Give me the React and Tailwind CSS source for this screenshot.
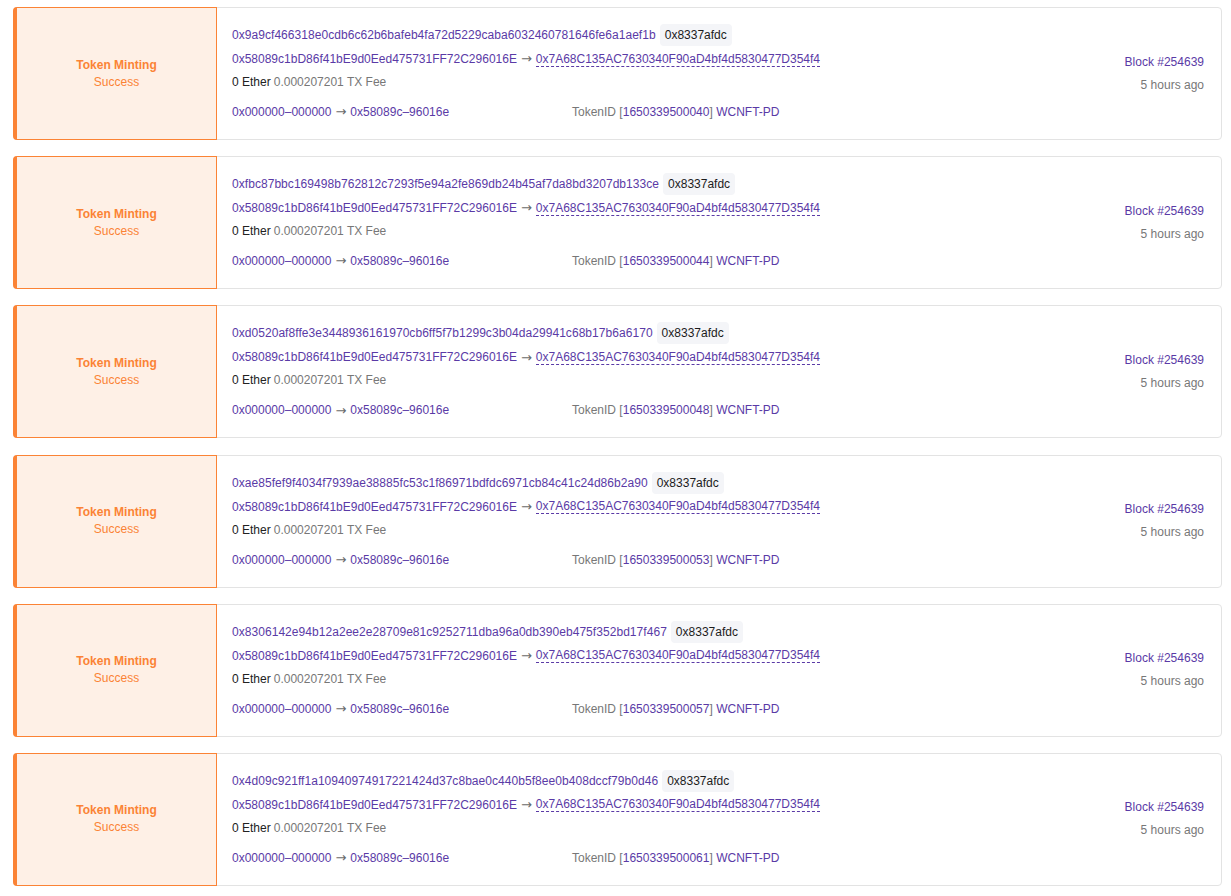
import React from 'react';

const rows = [
    { hash: '0x9a9cf466318e0cdb6c62b6bafeb4fa72d5229caba6032460781646fe6a1aef1b', token: '1650339500040' },
    { hash: '0xfbc87bbc169498b762812c7293f5e94a2fe869db24b45af7da8bd3207db133ce', token: '1650339500044' },
    { hash: '0xd0520af8ffe3e3448936161970cb6ff5f7b1299c3b04da29941c68b17b6a6170', token: '1650339500048' },
    { hash: '0xae85fef9f4034f7939ae38885fc53c1f86971bdfdc6971cb84c41c24d86b2a90', token: '1650339500053' },
    { hash: '0x8306142e94b12a2ee2e28709e81c9252711dba96a0db390eb475f352bd17f467', token: '1650339500057' },
    { hash: '0x4d09c921ff1a10940974917221424d37c8bae0c440b5f8ee0b408dccf79b0d46', token: '1650339500061' },
];

// arrow glyph is tiny in Liberation Sans, DejaVu is closer to the original
const Arrow = () => (
    <span className="text-[#6b6b6b] mx-[4px] text-[13px]" style={{ fontFamily: '"DejaVu Sans", sans-serif' }}>→</span>
);

const TxCard = ({ hash, token }) => {
    return (
        <div className="flex h-[133px] border border-[#e3e3e3] rounded-[4px] bg-white">
            <div className="w-[204px] shrink-0 -my-px -ml-px flex flex-col items-center justify-center bg-[#fef0e6] border border-[#fb8335] border-l-[4px] rounded-l-[4px] text-[12px] leading-[17px] text-[#fb8335]">
                <span className="font-bold">Token Minting</span>
                <span>Success</span>
            </div>
            <div className="flex-1 pl-[15px] pt-[16px] text-[12px] text-[#5a3aa6]">
                <div className="flex items-center h-[22px] gap-[4px]">
                    <span className="tracking-[0.05px]">{hash}</span>
                    <span className="h-[22px] px-[5px] flex items-center rounded-[4px] bg-[#f4f5f8] text-[#1c1c1c]">0x8337afdc</span>
                </div>
                <div className="mt-[1px] h-[24px] flex items-center">
                    <span>0x58089c1bD86f41bE9d0Eed475731FF72C296016E</span>
                    <Arrow />
                    <span className="border-b border-dashed border-[#5a3aa6] leading-[14px]">0x7A68C135AC7630340F90aD4bf4d5830477D354f4</span>
                </div>
                <div className="h-[22px] flex items-center">
                    <span className="text-[#222]">0 Ether</span>
                    <span className="text-[#777] ml-[3px]">0.000207201 TX Fee</span>
                </div>
                <div className="mt-[8px] h-[22px] grid grid-cols-[340px_1fr] items-center">
                    <div className="flex items-center">
                        <span>0x000000–000000</span>
                        <Arrow />
                        <span>0x58089c–96016e</span>
                    </div>
                    <div>
                        <span className="text-[#777]">TokenID [</span>
                        {token}
                        <span className="text-[#777]">]</span> WCNFT-PD
                    </div>
                </div>
            </div>
            <div className="flex flex-col items-end justify-center pr-[17px] text-[12px] leading-[23px]">
                <span className="text-[#5a3aa6]">Block #254639</span>
                <span className="text-[#777]">5 hours ago</span>
            </div>
        </div>
    );
};

export default function App() {
    return (
        <div className="min-h-screen bg-white pl-[13px] pr-[9px] pt-[7px] flex flex-col gap-[16.2px]" style={{ fontFamily: '"Liberation Sans", Arial, sans-serif' }}>
            {rows.map((r) => (
                <TxCard key={r.hash} hash={r.hash} token={r.token} />
            ))}
        </div>
    );
}
